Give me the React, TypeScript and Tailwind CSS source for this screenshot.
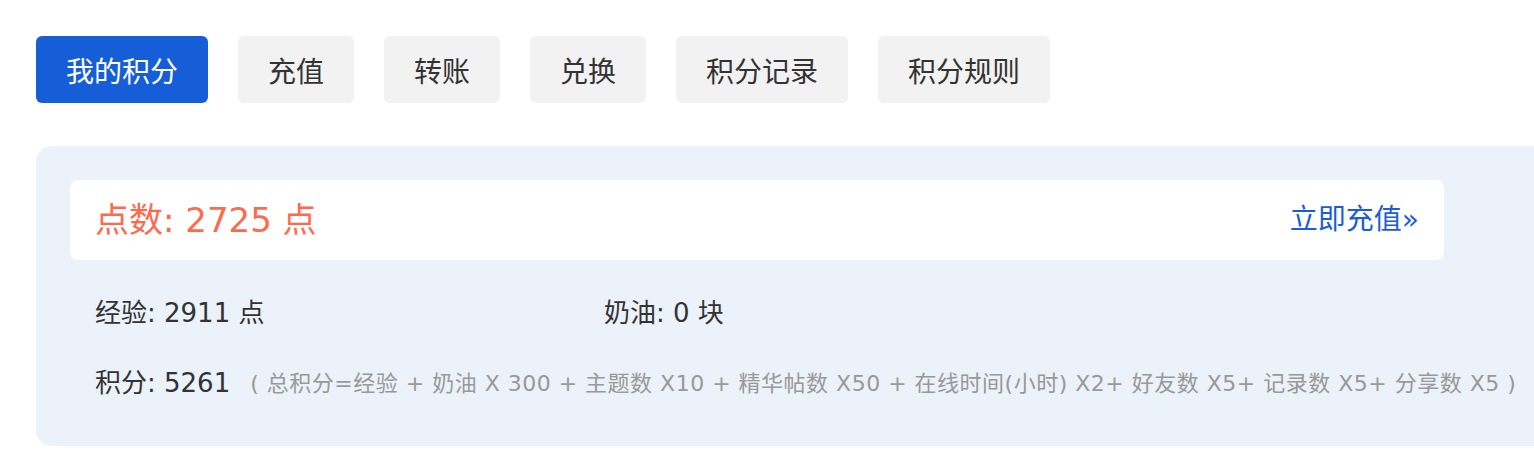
const TABS = ['我的积分', '充值', '转账', '兑换', '积分记录', '积分规则'];

export default function App() {
  return (
    <div className="h-[450px] w-[1534px] overflow-hidden bg-white pl-9 pt-9 font-['DejaVu_Sans','Noto_Sans_CJK_SC',sans-serif] text-[#333]">
      <nav className="flex gap-[30px] font-['Noto_Sans_CJK_SC',sans-serif]">
        {TABS.map((t, i) => (
          <button
            key={t}
            type="button"
            className={
              i === 0
                ? 'flex h-[67px] items-center rounded-md bg-[#165dd8] px-[30px] text-[28px] text-white'
                : 'flex h-[67px] items-center rounded-md bg-[#f2f2f2] px-[30px] text-[28px] text-[#333]'
            }
          >
            {t}
          </button>
        ))}
      </nav>

      <section className="mt-[43px] w-[1600px] rounded-l-2xl bg-[#ebf2fa] px-[34px] pb-[43px] pt-[34px]">
        <div className="flex h-[80px] w-[1374px] items-center justify-between rounded-lg bg-white px-[25px]">
          <span className="text-[34px] text-[#ff6a4d]">点数: 2725 点</span>
          <a href="#" className="text-[28px] text-[#1a5dd6]">立即充值»</a>
        </div>

        <div className="mt-[33px] flex h-[40px] items-center px-[25px] text-[26px]">
          <span className="w-[509px]">经验: 2911 点</span>
          <span>奶油: 0 块</span>
        </div>

        <div className="mt-[30px] flex h-[40px] items-center whitespace-nowrap px-[25px]">
          <span className="text-[26px]">积分: 5261</span>
          <span className="ml-[20px] text-[22px] tracking-[0.5px] text-[#999]">
            ( 总积分=经验 + 奶油 X 300 + 主题数 X10 + 精华帖数 X50 + 在线时间(小时) X2+ 好友数 X5+ 记录数 X5+ 分享数 X5 )
          </span>
        </div>
      </section>
    </div>
  );
}
